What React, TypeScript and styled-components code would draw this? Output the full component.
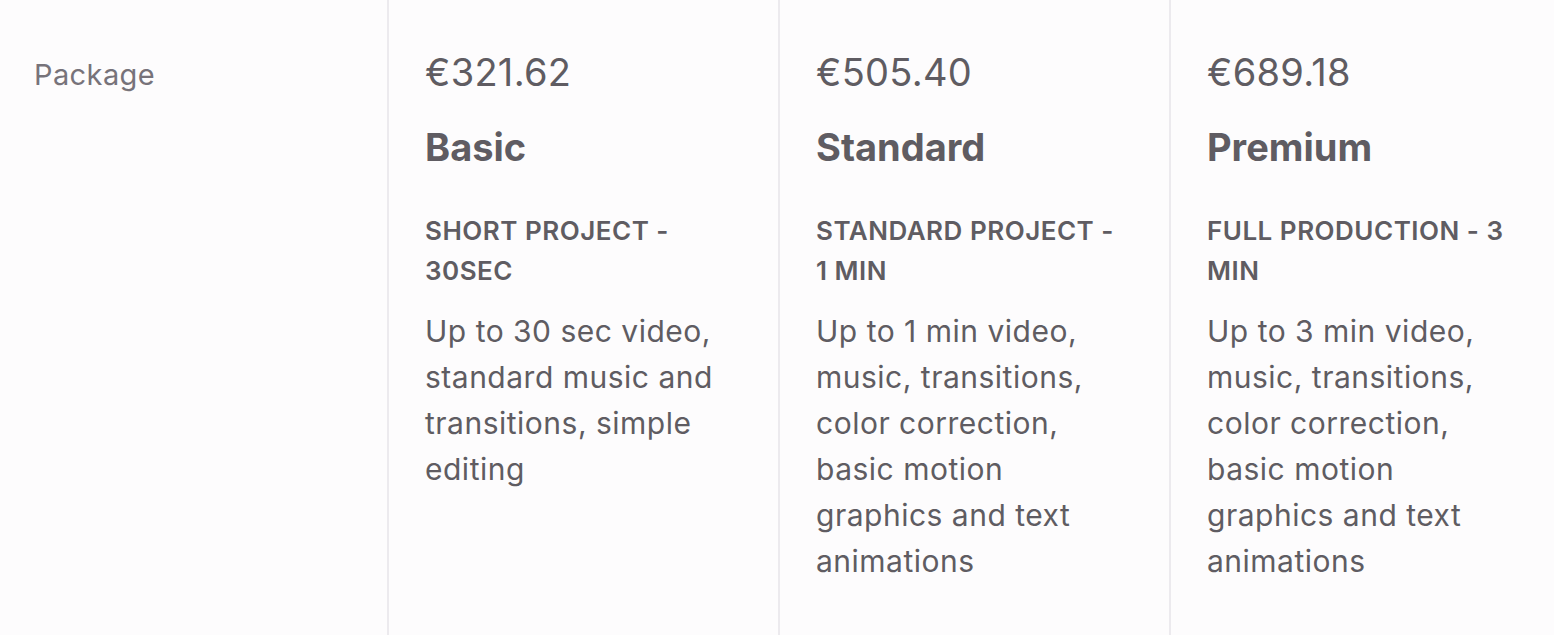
import styled, { createGlobalStyle } from "styled-components";

const GlobalStyle = createGlobalStyle`
  html, body {
    margin: 0;
    padding: 0;
    background: #fdfcfd;
    overflow: hidden;
  }
  * {
    box-sizing: border-box;
  }
`;

const Table = styled.div`
  display: grid;
  grid-template-columns: 387px 391px 391px 1fr;
  height: 100vh;
  font-family: Inter, "Liberation Sans", sans-serif;
  color: #5f5c62;
`;

const LabelCell = styled.div`
  padding: 57px 0 0 34px;
  font-size: 29px;
  color: #77737a;
  letter-spacing: 0.4px;
`;

const PackageCell = styled.div`
  border-left: 2px solid #eceaee;
  padding: 49px 43px 0 36px;
  display: flex;
  flex-direction: column;
`;

const Price = styled.div`
  font-size: 38px;
  line-height: 46px;
  font-weight: 400;
  letter-spacing: 0.3px;
`;

const Title = styled.div`
  margin-top: 29px;
  font-size: 38px;
  line-height: 46px;
  font-weight: 700;
`;

const Subtitle = styled.div`
  margin-top: 41px;
  font-size: 26px;
  line-height: 40px;
  font-weight: 600;
  letter-spacing: 0.5px;
  text-transform: uppercase;
`;

const Description = styled.p`
  margin: 17px 0 0;
  font-size: 30px;
  line-height: 46px;
  letter-spacing: 0.5px;
`;

type Pack = {
  price: string;
  name: string;
  scope: string;
  details: string;
};

const packages: Pack[] = [
  {
    price: "€321.62",
    name: "Basic",
    scope: "Short project - 30sec",
    details: "Up to 30 sec video, standard music and transitions, simple editing",
  },
  {
    price: "€505.40",
    name: "Standard",
    scope: "Standard project - 1 min",
    details:
      "Up to 1 min video, music, transitions, color correction, basic motion graphics and text animations",
  },
  {
    price: "€689.18",
    name: "Premium",
    scope: "Full production - 3 min",
    details:
      "Up to 3 min video, music, transitions, color correction, basic motion graphics and text animations",
  },
];

export default function App() {
  return (
    <>
      <GlobalStyle />
      <Table>
        <LabelCell>Package</LabelCell>
        {packages.map((p) => (
          <PackageCell key={p.name}>
            <Price>{p.price}</Price>
            <Title>{p.name}</Title>
            <Subtitle>{p.scope}</Subtitle>
            <Description>{p.details}</Description>
          </PackageCell>
        ))}
      </Table>
    </>
  );
}
